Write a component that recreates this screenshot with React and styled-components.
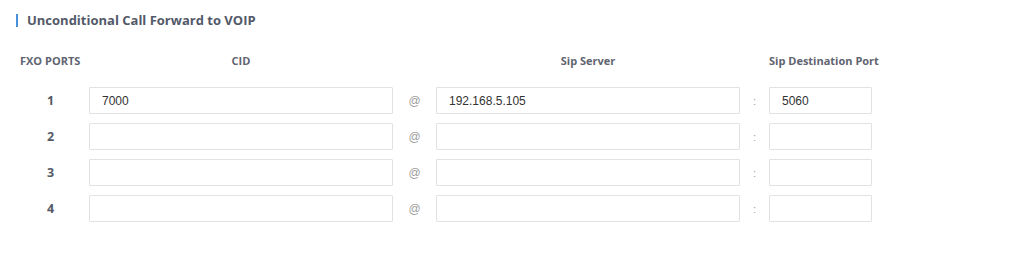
import React from 'react';
import styled, { createGlobalStyle } from 'styled-components';

const GlobalStyle = createGlobalStyle`
  body {
    margin: 0;
    background: #ffffff;
    font-family: "Open Sans", Arial, sans-serif;
  }
`;

const Page = styled.div`
  width: 1024px;
  height: 267px;
  background: #fff;
  padding: 13px 0 0 16px;
  box-sizing: border-box;
`;

const SectionTitle = styled.h2`
  display: flex;
  align-items: center;
  gap: 9px;
  margin: 0;
  font-size: 13px;
  font-weight: 700;
  color: #535968;
  line-height: 15px;

  &::before {
    content: '';
    display: block;
    width: 2px;
    height: 13px;
    background: #4a90d9;
  }
`;

const Grid = styled.div`
  display: grid;
  grid-template-columns: 69px 304px 43px 304px 29px 103px;
  grid-auto-rows: 27px;
  row-gap: 9px;
  align-items: center;
  margin: 23px 0 0 4px;
`;

const HeadCell = styled.div`
  font-size: 11px;
  font-weight: 700;
  color: #5f6470;
  text-align: ${p => (p.left ? 'left' : 'center')};
  white-space: nowrap;
  margin-bottom: 9px;
`;

const PortNum = styled.div`
  font-size: 12.5px;
  font-weight: 700;
  color: #555a66;
  text-align: center;
  padding-right: 8px;
`;

const Field = styled.input`
  box-sizing: border-box;
  width: 100%;
  height: 27px;
  border: 1px solid #e2e2e2;
  border-radius: 1px;
  padding: 0 12px;
  font-family: "Liberation Sans", Arial, sans-serif;
  font-size: 12px;
  color: #333;
  background: #fff;
  outline: none;
`;

const Sep = styled.div`
  text-align: center;
  font-family: "Liberation Sans", Arial, sans-serif;
  font-size: ${p => (p.small ? '11px' : '12px')};
  color: #a0a0a0;
`;

const rows = [
  { port: 1, cid: '7000', server: '192.168.5.105', dest: '5060' },
  { port: 2, cid: '', server: '', dest: '' },
  { port: 3, cid: '', server: '', dest: '' },
  { port: 4, cid: '', server: '', dest: '' },
];

export default function App() {
  return (
    <Page>
      <GlobalStyle />
      <SectionTitle>Unconditional Call Forward to VOIP</SectionTitle>
      <Grid>
        <HeadCell left>FXO PORTS</HeadCell>
        <HeadCell>CID</HeadCell>
        <div />
        <HeadCell>Sip Server</HeadCell>
        <div />
        <HeadCell>Sip Destination Port</HeadCell>
        {rows.map(r => (
          <React.Fragment key={r.port}>
            <PortNum>{r.port}</PortNum>
            <Field defaultValue={r.cid} />
            <Sep>@</Sep>
            <Field defaultValue={r.server} />
            <Sep small>:</Sep>
            <Field defaultValue={r.dest} />
          </React.Fragment>
        ))}
      </Grid>
    </Page>
  );
}
